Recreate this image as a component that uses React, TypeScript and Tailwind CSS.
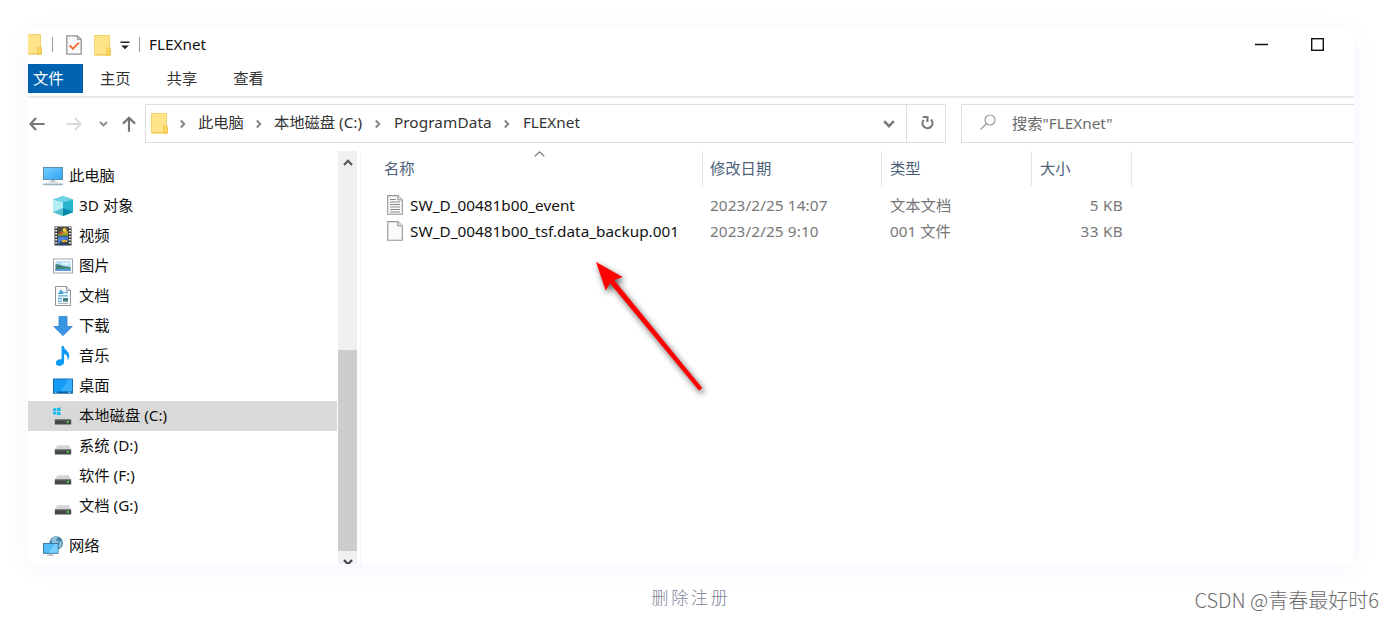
import { ReactNode } from "react";

type TreeItem = {
    label: string;
    icon: ReactNode;
    root?: boolean;
    active?: boolean;
};

function FolderIcon({ className }: { className: string }) {
    return (
        <svg className={className} viewBox="0 0 17 21" fill="none">
            <path d="M.5.5h15v13.5h1v6H.5z" fill="#ffe48a" stroke="#f3d26a" />
            <path d="M12.6 13h3.6v7.2h-3.6z" fill="#fbd964" stroke="#ecc24c" strokeWidth=".8" />
            <path d="M1 19.9h15" stroke="#efc655" />
        </svg>
    );
}

function Chevron({ className }: { className: string }) {
    return (
        <svg className={className} viewBox="0 0 8 10" fill="none" stroke="#858585" strokeWidth="2">
            <path d="M1.8 1.5 5.2 5 1.8 8.5" />
        </svg>
    );
}

function PcIcon() {
    return (
        <svg className="h-5 w-5" viewBox="0 0 20 20">
            <defs>
                <linearGradient id="screen" x1="0" y1="0" x2="1" y2="1">
                    <stop offset="0" stopColor="#77ccff" />
                    <stop offset="1" stopColor="#2ba6f4" />
                </linearGradient>
            </defs>
            <rect x=".5" y="1.5" width="19" height="12" fill="url(#screen)" stroke="#5c8eaf" />
            <path d="M8 14h4v1.5h2.5v1h-9v-1H8z" fill="#b9c6cf" />
            <rect x="0" y="17.6" width="20" height="1.6" rx=".8" fill="#9db0bd" />
        </svg>
    );
}

function CubeIcon() {
    return (
        <svg className="h-5 w-5" viewBox="0 0 20 20">
            <path d="M10 0 20 3.5v12.8L10 20 0 16.3V3.5z" fill="#27b4cf" />
            <path d="M10 0 20 3.5 10 6.2 0 3.5z" fill="#70d5e3" />
            <path d="M0 3.5 10 6.2V20L0 16.3z" fill="#b2eef2" />
            <path d="M0 16.3 10 12v8z" fill="#55bfcd" />
            <path d="M10 12 20 16.3 10 20z" fill="#078aa8" />
        </svg>
    );
}

function VideoIcon() {
    return (
        <svg className="h-5 w-5" viewBox="0 0 20 20">
            <rect x="1.5" y=".5" width="17" height="19" fill="#383838" />
            <rect x="5" y="1" width="10" height="8.5" fill="#4c4e44" />
            <rect x="5" y="10.5" width="10" height="9" fill="#4b82d8" />
            <path d="M5 9.5 8 5l2 2 2-4 3 3v3.5z" fill="#d19c21" />
            <circle cx="11.5" cy="4" r="2" fill="#edcf3e" />
            <path d="M5 8h10v1.5H5z" fill="#5fab37" />
            <circle cx="8" cy="7" r="1.5" fill="#cf4335" />
            <path d="m5 19 3-4 2 2 2.5-4 2.5 3v3z" fill="#354354" />
            <path d="M9 14h5v2H9z" fill="#dda82d" />
            <path d="M3.2 1v18M16.8 1v18" stroke="#f4f4f4" strokeWidth="1.9" strokeDasharray="1.5 1.5" />
        </svg>
    );
}

function PictureIcon() {
    return (
        <svg className="h-5 w-5" viewBox="0 0 20 20">
            <rect x=".5" y="3" width="19" height="14" fill="#fff" stroke="#a2a6aa" />
            <rect x="2.5" y="5" width="15" height="10" fill="#b9e0fa" />
            <path d="M2.5 8.5c4-1 6 2.5 15 2.5v4h-15z" fill="#3f837a" />
            <path d="M2.5 13.2c5-.6 9-.2 15-.7V15h-15z" fill="#5a9bd5" />
            <path d="M9 6.5h7v2H9z" fill="#e9f6fd" />
        </svg>
    );
}

function DocumentIcon() {
    return (
        <svg className="h-5 w-5" viewBox="0 0 20 20" fill="none">
            <path d="M2.5.5h11l4 4v15h-15z" fill="#fcfcfc" stroke="#8e9598" />
            <path d="M13.5.5v4h4" fill="#e1e6e8" stroke="#8e9598" />
            <path d="M5 8 7.5 3.5 10.5 6v2z" fill="#45a2db" />
            <path d="M11.5 6.5H15M5 9.8h10M5 12.5h4M5 15.2h4" stroke="#4eabe2" strokeWidth="1.3" />
            <path d="M10 12h5v3.6h-5z" fill="#487f86" />
            <path d="M5 17.3h10" stroke="#a5b3b9" />
        </svg>
    );
}

function DownloadIcon() {
    return (
        <svg className="h-5 w-5" viewBox="0 0 20 20">
            <path d="M6 .5h8v10h5.2L10 19.7.8 10.5H6z" fill="#3a96e4" stroke="#2c82cf" strokeWidth=".8" />
        </svg>
    );
}

function MusicIcon() {
    return (
        <svg className="h-5 w-5" viewBox="0 0 20 20" fill="#0c98f5">
            <path d="M8.6 0h2c.4 3.6 5.7 5.2 5.7 9.8 0 2-.8 3.7-1.8 4.8.8-4-1.1-5.7-3.4-6.5v8c0 2.3-2 3.9-4.5 3.9-2.3 0-3.8-1.2-3.8-3 0-2.2 2.2-3.8 4.5-3.8.5 0 .9.1 1.3.3z" />
        </svg>
    );
}

function DesktopIcon() {
    return (
        <svg className="h-5 w-5" viewBox="0 0 20 20">
            <rect x=".5" y="3" width="19" height="14.2" fill="#149bf4" stroke="#1672b5" />
            <path d="m8 15 7-11.5h4V15z" fill="#34adfb" />
            <path d="M1 15.6h18v1.2H1z" fill="#14588a" />
            <path d="M2 16.2h1.5M15.5 16.2h2" stroke="#d8efff" />
        </svg>
    );
}

function DriveIcon({ system }: { system?: boolean }) {
    return (
        <svg className="h-5 w-5" viewBox="0 0 20 20">
            <path d="M4.5 9.2h11.2l2.5 4.2H1.8z" fill="#d3d5d6" />
            {system && (
                <path d="M0 2.4 3.3 2v3H0zM4 1.9l3.5-.5V5H4zM0 5.7h3.3v3L0 8.3zM4 5.7h3.5v3.6L4 8.8z" fill="#17baf0" />
            )}
            <rect x="1.8" y="13.2" width="16.4" height="5.3" rx=".6" fill="#454849" />
            <path d="M2 13.8h16" stroke="#818486" />
            <rect x="13.8" y="15" width="2" height="1.8" fill="#46dc45" />
        </svg>
    );
}

function NetworkIcon() {
    return (
        <svg className="h-5 w-5" viewBox="0 0 20 20">
            <circle cx="13.2" cy="7" r="6.8" fill="#4484a9" />
            <path d="M8 4c2-4 5-4 7-3l-2 3 3 2-2 3-4-1zM17 5l2 1-1 5-3 1z" fill="#8fc3dc" />
            <rect x=".5" y="7.5" width="14.5" height="9.8" fill="#55bdf6" stroke="#397ba4" />
            <path d="m6 16.8 6-8.8h2.5v8.8z" fill="#7bd0fc" />
            <path d="M6 17.8h3v1h2v1H4v-1h2z" fill="#a9b6be" />
        </svg>
    );
}

function FileIcon({ lines }: { lines?: boolean }) {
    return (
        <svg className="h-5 w-4" viewBox="0 0 16 20" fill="none">
            <path d="M.7.6h10.1l4.5 4.3v14.4H.7z" fill="#f9f9f9" stroke="#949494" strokeWidth="1.1" />
            <path d="M10.8.6v4.3h4.5" fill="#e4e4e4" stroke="#949494" />
            {lines && <path d="M3 4.5h6M3 7h10M3 9.5h10M3 12h10M3 14.5h10M3 17h10" stroke="#8c8c8c" strokeWidth="1.1" />}
        </svg>
    );
}

const tree: TreeItem[] = [
    { label: "此电脑", icon: <PcIcon />, root: true },
    { label: "3D 对象", icon: <CubeIcon /> },
    { label: "视频", icon: <VideoIcon /> },
    { label: "图片", icon: <PictureIcon /> },
    { label: "文档", icon: <DocumentIcon /> },
    { label: "下载", icon: <DownloadIcon /> },
    { label: "音乐", icon: <MusicIcon /> },
    { label: "桌面", icon: <DesktopIcon /> },
    { label: "本地磁盘 (C:)", icon: <DriveIcon system />, active: true },
    { label: "系统 (D:)", icon: <DriveIcon /> },
    { label: "软件 (F:)", icon: <DriveIcon /> },
    { label: "文档 (G:)", icon: <DriveIcon /> },
];

const files = [
    { name: "SW_D_00481b00_event", date: "2023/2/25 14:07", type: "文本文档", size: "5 KB", text: true },
    { name: "SW_D_00481b00_tsf.data_backup.001", date: "2023/2/25 9:10", type: "001 文件", size: "33 KB", text: false },
];

function TitleBar() {
    return (
        <div className="flex h-9 items-center pb-1">
            <FolderIcon className="-ml-[3px] h-[21px] w-[17px]" />
            <span className="ml-[10px] h-[15px] w-px bg-[#9a9a9a]" />
            <svg className="ml-[13px] mt-[2px] h-5 w-4" viewBox="0 0 16 20" fill="none">
                <path d="M.8.8h10.5l3.9 3.8v14.6H.8z" fill="#fafafa" stroke="#929292" strokeWidth="1.3" />
                <path d="M11.3.8v3.8h3.9" stroke="#929292" />
                <path d="m3.7 10.4 3.2 3.5 6-6.3" stroke="#f26a35" strokeWidth="2" />
            </svg>
            <FolderIcon className="ml-3 mt-[2px] h-[21px] w-[17px]" />
            <svg className="ml-[9px] mt-[3px] h-[9px] w-[10px]" viewBox="0 0 10 9" fill="#222">
                <path d="M.5.5h9v1.4h-9zM1.2 4.5h7.6L5 8.3z" />
            </svg>
            <span className="ml-[9px] h-[15px] w-px bg-[#9a9a9a]" />
            <span className="ml-[9px] text-[#111]">FLEXnet</span>
            <svg className="ml-auto h-[13px] w-[13px]" viewBox="0 0 13 13" stroke="#111" strokeWidth="1.3">
                <path d="M0 6.5h13" />
            </svg>
            <svg className="ml-[43px] mr-[30px] h-[13px] w-[13px]" viewBox="0 0 13 13" fill="none" stroke="#111" strokeWidth="1.4">
                <rect x=".7" y=".7" width="11.6" height="11.6" />
            </svg>
        </div>
    );
}

function AddressBar() {
    return (
        <div className="mt-[6px] flex h-[39px] items-center text-[#333]">
            <svg className="ml-[1px] h-4 w-4" viewBox="0 0 16 16" fill="none" stroke="#757575" strokeWidth="2.2">
                <path d="M7 2 1.5 8 7 14M1.5 8h14" />
            </svg>
            <svg className="ml-[21px] h-4 w-4" viewBox="0 0 16 16" fill="none" stroke="#d9d9d9" strokeWidth="2">
                <path d="m9 2 5.5 6L9 14M14.5 8H.5" />
            </svg>
            <svg className="ml-[17px] h-[6px] w-[9px]" viewBox="0 0 9 6" fill="none" stroke="#888" strokeWidth="1.9">
                <path d="m1 1 3.5 3.5L8 1" />
            </svg>
            <svg className="ml-[13px] h-4 w-4" viewBox="0 0 16 16" fill="none" stroke="#757575" strokeWidth="2.2">
                <path d="M2 7.6 8 1.8l6 5.8M8 1.8v14" />
            </svg>
            <div className="ml-2 flex h-[39px] w-[801px] items-center border border-[#dedede]">
                <FolderIcon className="ml-[5px] h-[21px] w-[17px]" />
                <Chevron className="ml-[11px] h-[10px] w-2" />
                <span className="mb-[3px] ml-[11px]">此电脑</span>
                <Chevron className="ml-[11px] h-[10px] w-2" />
                <span className="mb-[3px] ml-[11px] w-[90px] whitespace-nowrap">本地磁盘 (C:)</span>
                <Chevron className="ml-[10px] h-[10px] w-2" />
                <span className="mb-[3px] ml-[12px] w-[98px] tracking-[0.1px]">ProgramData</span>
                <Chevron className="ml-[11px] h-[10px] w-2" />
                <span className="mb-[3px] ml-[12px]">FLEXnet</span>
                <svg className="ml-auto mr-[11px] h-[8px] w-[12px]" viewBox="0 0 12 8" fill="none" stroke="#777" strokeWidth="2.4">
                    <path d="m1.2 1.2 4.8 5 4.8-5" />
                </svg>
                <div className="flex h-full w-[39px] items-center justify-center border-l border-[#dedede]">
                    <svg className="mb-[2px] ml-[2px] h-[15px] w-[13px]" viewBox="0 0 13 15" fill="none" stroke="#7b7b7b" strokeWidth="2.2">
                        <path d="M10 4.6a5 5 0 1 1-7.4.4M1.8 2h4.6v5" />
                    </svg>
                </div>
            </div>
            <div className="ml-[15px] flex h-[39px] flex-1 items-center border border-r-0 border-[#dedede]">
                <svg className="mb-[3px] ml-[18px] h-4 w-4" viewBox="0 0 16 16" fill="none" stroke="#999" strokeWidth="1.2">
                    <circle cx="10" cy="6" r="5" />
                    <path d="m6.5 9.5-6 6" />
                </svg>
                <span className="mb-[2px] ml-[16px] text-[#6b6b6b]">搜索"FLEXnet"</span>
            </div>
        </div>
    );
}

function Sidebar() {
    return (
        <div className="w-[309px] shrink-0 pt-[10px] text-[#111]">
            {tree.map((item) => (
                <div
                    key={item.label}
                    className={`flex h-[30px] items-center gap-[6px] ${item.root ? "pl-[15px]" : "pl-[25px]"} ${
                        item.active ? "bg-[#d9d9d9]" : ""
                    }`}
                >
                    {item.icon}
                    <span className="mb-[2px]">{item.label}</span>
                </div>
            ))}
            <div className="mt-[10px] flex h-[30px] items-center gap-[6px] pl-[15px]">
                <NetworkIcon />
                <span className="mb-[2px]">网络</span>
            </div>
        </div>
    );
}

function Scrollbar() {
    return (
        <div className="ml-[1px] flex w-[19px] shrink-0 flex-col items-center bg-[#f0f0f0]">
            <svg className="mt-[8px] h-[7px] w-[10px] shrink-0" viewBox="0 0 10 7" fill="none" stroke="#555" strokeWidth="2.2">
                <path d="m1 6 4-4.2L9 6" />
            </svg>
            <div className="mt-[184px] h-[201px] w-full shrink-0 bg-[#cdcdcd]" />
            <svg className="mt-[8px] h-[7px] w-[10px] shrink-0" viewBox="0 0 10 7" fill="none" stroke="#444" strokeWidth="2.2">
                <path d="m1 1 4 4.2L9 1" />
            </svg>
        </div>
    );
}

function FileList() {
    return (
        <div className="ml-[3px] flex-1 border-l border-[#f4f4f4]">
            <div className="grid h-[35px] w-[771px] grid-cols-[342px_179px_150px_100px] text-[#4c607a]">
                <div className="relative flex items-center border-r border-[#e5e5e5] pb-[2px] pl-[23px]">
                    名称
                    <svg className="absolute left-[173px] top-0 h-[6px] w-[11px]" viewBox="0 0 11 6" fill="none" stroke="#777" strokeWidth="1.3">
                        <path d="m.7 5.4 4.8-4.5 4.8 4.5" />
                    </svg>
                </div>
                <div className="flex items-center border-r border-[#e5e5e5] pb-[2px] pl-[7px]">修改日期</div>
                <div className="flex items-center border-r border-[#e5e5e5] pb-[2px] pl-2">类型</div>
                <div className="flex items-center border-r border-[#e5e5e5] pb-[2px] pl-2">大小</div>
            </div>
            <div className="mt-[6px]">
                {files.map((file) => (
                    <div key={file.name} className="grid h-[26px] w-[771px] grid-cols-[342px_179px_150px_100px] items-center text-[#777]">
                        <div className="flex items-center gap-[7px] pl-[26px] text-[#111]">
                            <FileIcon lines={file.text} />
                            <span className="whitespace-nowrap tracking-[0.02px]">{file.name}</span>
                        </div>
                        <div className="pl-[7px] tracking-[0.12px]">{file.date}</div>
                        <div className="pl-2">{file.type}</div>
                        <div className="pr-[9px] text-right tracking-[0.3px]">{file.size}</div>
                    </div>
                ))}
            </div>
        </div>
    );
}

function App() {
    return (
        <div className="flex h-[620px] w-[1394px] flex-col overflow-hidden bg-white pt-7 font-['Noto_Sans','Noto_Sans_CJK_SC',sans-serif] text-[15.3px] leading-5">
            <div className="relative ml-7 flex h-[536px] w-[1326px] shrink-0 flex-col overflow-hidden rounded-lg bg-white shadow-[0_4px_24px_rgba(90,80,255,0.06)]">
                <TitleBar />
                <div className="flex h-7 items-center text-[#333]">
                    <div className="flex h-[29px] w-[55px] items-center bg-[#0063b1] pl-[5px] text-white">文件</div>
                    <span className="ml-[17px]">主页</span>
                    <span className="ml-[36px]">共享</span>
                    <span className="ml-[36px]">查看</span>
                </div>
                <div className="mt-[4px] h-[2px] shrink-0 bg-[#e8e8e8]" />
                <AddressBar />
                <div className="mt-[8px] flex min-h-0 flex-1">
                    <Sidebar />
                    <Scrollbar />
                    <FileList />
                </div>

                {/* Red pointer over the file list */}
                <svg
                    className="absolute left-[560px] top-[226px] h-[150px] w-[130px] drop-shadow-[2px_3px_3px_rgba(0,0,0,0.65)]"
                    viewBox="0 0 130 150"
                    fill="#f00"
                >
                    <path d="m8.5 8.5 25.5 14.5-8.3 2.9L114 134l-3 2.2L21.9 28.7l-4 7.3z" stroke="#f00" strokeWidth=".6" />
                </svg>
            </div>

            <div className="relative flex flex-1 justify-center pt-[23px]">
                <p className="-ml-[12px] font-['Noto_Sans_CJK_SC',sans-serif] text-[17px] font-light tracking-[2.8px] text-[#7d8299]">删除注册</p>
                <span className="absolute right-[15px] top-[26px] font-['Noto_Sans_CJK_SC',sans-serif] text-[20px] font-light text-[#6c6c6c]">
                    CSDN @青春最好时6
                </span>
            </div>
        </div>
    );
}

export default App;
